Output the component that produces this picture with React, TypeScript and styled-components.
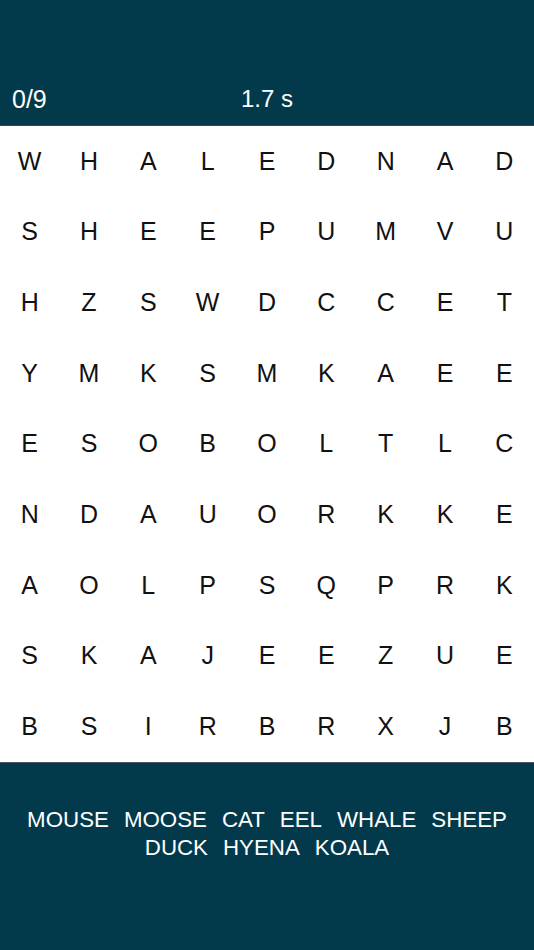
import styled, { createGlobalStyle } from 'styled-components';

const GRID = [
  'WHALEDNAD',
  'SHEEPUMVU',
  'HZSWDCCET',
  'YMKSMKAEE',
  'ESOBOLTLC',
  'NDAUORKKE',
  'AOLPSQPRK',
  'SKAJEEZUE',
  'BSIRBRXJB',
];

const WORDS = ['MOUSE', 'MOOSE', 'CAT', 'EEL', 'WHALE', 'SHEEP', 'DUCK', 'HYENA', 'KOALA'];

const GlobalStyle = createGlobalStyle`
  html, body {
    margin: 0;
    padding: 0;
    background: #ffffff;
  }
  body {
    font-family: "Liberation Sans", Arial, sans-serif;
  }
`;

const Page = styled.div`
  display: flex;
  flex-direction: column;
  width: 534px;
  height: 950px;
`;

const Header = styled.header`
  height: 126px;
  box-sizing: border-box;
  background: #023a4c;
  border-bottom: 1px solid #34435a;
  display: grid;
  grid-template-columns: 1fr auto 1fr;
  align-items: end;
  padding: 0 12px 12px;
  color: #ffffff;
  font-size: 25px;
  line-height: 28px;
`;

const Score = styled.span`
  justify-self: start;
`;

const Timer = styled.span`
  justify-self: center;
  font-size: 24px;
`;

const Board = styled.div`
  display: grid;
  grid-template-columns: repeat(9, 1fr);
  grid-template-rows: repeat(9, 70.67px);
  background: #ffffff;
`;

const Cell = styled.div`
  display: flex;
  align-items: center;
  justify-content: center;
  color: #111111;
  font-size: 25px;
`;

const Footer = styled.footer`
  flex: 1;
  background: #023a4c;
  border-top: 1px solid #4a5566;
  display: flex;
  flex-wrap: wrap;
  justify-content: center;
  align-content: flex-start;
  column-gap: 15px;
  padding: 43px 16px 0;
`;

const Word = styled.span`
  color: #ffffff;
  font-size: 22.3px;
  line-height: 28px;
`;

export default function App() {
  return (
    <>
      <GlobalStyle />
      <Page>
        <Header>
          <Score>0/9</Score>
          <Timer>1.7 s</Timer>
          <span />
        </Header>
        <Board>
          {GRID.map((row, r) =>
            row.split('').map((ch, c) => <Cell key={`${r}-${c}`}>{ch}</Cell>)
          )}
        </Board>
        <Footer>
          {WORDS.map((w) => (
            <Word key={w}>{w}</Word>
          ))}
        </Footer>
      </Page>
    </>
  );
}
